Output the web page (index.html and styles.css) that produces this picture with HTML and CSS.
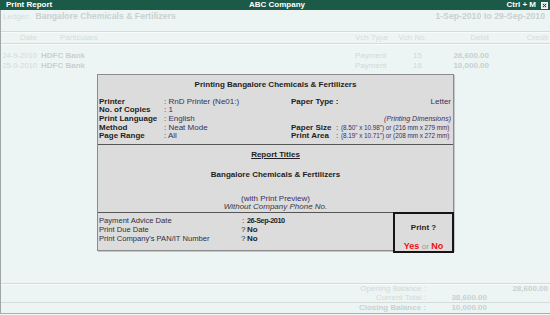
FILE: index.html
```html
<!DOCTYPE html>
<html>
<head>
<meta charset="utf-8">
<link rel="stylesheet" href="styles.css">
</head>
<body>
<div class="screen">
  <div class="titlebar">
    <span class="tb-left">Print Report</span>
    <span class="tb-center">ABC Company</span>
    <span class="tb-right">Ctrl + M
      <svg class="close" width="7" height="7" viewBox="0 0 7 7"><rect x="0.5" y="0.5" width="6" height="6" fill="#d8dcdc" stroke="#f4f4f4"/><path d="M2 2 L5 5 M5 2 L2 5" stroke="#333" stroke-width="1"/></svg>
    </span>
  </div>

  <div class="ledger">
    <div><span class="lg-label">Ledger:</span> <span class="lg-name">Bangalore Chemicals &amp; Fertilizers</span></div>
    <div class="lg-period">1-Sep-2010 to 29-Sep-2010</div>
  </div>

  <div class="grid colhead">
    <span class="c-date">Date</span>
    <span class="c-part hd-part">Particulars</span>
    <span class="c-type">Vch Type</span>
    <span class="c-no">Vch No.</span>
    <span class="c-num">Debit</span>
    <span class="c-num">Credit</span>
  </div>

  <div class="rows">
    <div class="grid row">
      <span class="c-date">24-9-2010</span>
      <span class="c-part b">HDFC Bank</span>
      <span class="c-type">Payment</span>
      <span class="c-no v">15</span>
      <span class="c-num b">28,600.00</span>
      <span class="c-num"></span>
    </div>
    <div class="grid row">
      <span class="c-date">25-9-2010</span>
      <span class="c-part b">HDFC Bank</span>
      <span class="c-type">Payment</span>
      <span class="c-no v">16</span>
      <span class="c-num b">10,000.00</span>
      <span class="c-num"></span>
    </div>
  </div>

  <div class="spacer"></div>

  <div class="totals">
    <div class="tgrid">
      <span class="t-label">Opening Balance :</span><span class="c-num"></span><span class="c-num b">28,600.00</span>
      <span class="t-label">Current Total :</span><span class="c-num b">38,600.00</span><span class="c-num"></span>
    </div>
    <div class="tgrid closing">
      <span class="t-label b">Closing Balance :</span><span class="c-num b">10,000.00</span><span class="c-num"></span>
    </div>
  </div>

  <div class="dialog">
    <div class="dlg-title">Printing Bangalore Chemicals &amp; Fertilizers</div>

    <div class="settings">
      <div class="srow">
        <span class="lbl">Printer</span>
        <span class="val">: RnD Printer (Ne01:)</span>
        <span class="lbl">Paper Type :</span>
        <span class="val right">Letter</span>
      </div>
      <div class="srow">
        <span class="lbl">No. of Copies</span>
        <span class="val">: 1</span>
        <span></span><span></span>
      </div>
      <div class="srow">
        <span class="lbl">Print Language</span>
        <span class="val">: English</span>
        <span class="val right dims-note">(Printing Dimensions)</span>
      </div>
      <div class="srow">
        <span class="lbl">Method</span>
        <span class="val">: Neat Mode</span>
        <span class="lbl">Paper Size</span>
        <span class="val dims"><span class="colon">:</span> (8.50" x 10.98") or (216 mm x 279 mm)</span>
      </div>
      <div class="srow">
        <span class="lbl">Page Range</span>
        <span class="val">: All</span>
        <span class="lbl">Print Area</span>
        <span class="val dims"><span class="colon">:</span> (8.19" x 10.71") or (208 mm x 272 mm)</span>
      </div>
    </div>

    <div class="titles">
      <div class="rt">Report Titles</div>
      <div class="rt-name">Bangalore Chemicals &amp; Fertilizers</div>
      <div class="rt-preview">(with Print Preview)</div>
      <div class="rt-phone">Without Company Phone No.</div>
    </div>

    <div class="bottom">
      <div class="opts">
        <div class="orow"><span>Payment Advice Date</span><span class="mark">:</span><span class="ov date">26-Sep-2010</span></div>
        <div class="orow"><span>Print Due Date</span><span class="mark">?</span><span class="ov">No</span></div>
        <div class="orow"><span>Print Company's PAN/IT Number</span><span class="mark">?</span><span class="ov">No</span></div>
      </div>
      <div class="printbox">
        <div class="pq">Print ?</div>
        <div class="yn"><span class="red">Yes</span> <span class="or">or</span> <span class="red">No</span></div>
      </div>
    </div>
  </div>
</div>
</body>
</html>
```

FILE: styles.css
```css
* { box-sizing: border-box; margin: 0; padding: 0; }

body {
  margin: 0;
  width: 550px;
  height: 315px;
  overflow: hidden;
  background: #f3f8f7;
  font-family: "Liberation Sans", Arial, sans-serif;
  font-size: 8px;
  color: #cdd5d5;
}

.screen {
  position: relative;
  width: 550px;
  height: 314px;
  border-left: 1px solid #9ea6a6;
  border-bottom: 1px solid #a8afaf;
  background: #edf5f4;
  display: flex;
  flex-direction: column;
}

.b { font-weight: bold; }

/* title bar */
.titlebar {
  height: 10px;
  margin-left: -1px;
  width: 550px;
  background: #1b5a46;
  color: #fff;
  font-weight: bold;
  font-size: 8px;
  line-height: 10px;
  display: grid;
  grid-template-columns: 1fr auto 1fr;
  padding: 0 2px 0 6px;
}
.tb-center { text-align: center; }
.tb-right {
  justify-self: end;
  display: flex;
  align-items: center;
  gap: 5px;
}
.close { display: block; }

/* ledger header */
.ledger {
  height: 22px;
  display: flex;
  justify-content: space-between;
  padding: 1px 5px 0 2px;
  line-height: 11px;
  border-bottom: 1px solid #d4dbdb;
  box-shadow: 0 1px 0 #f7fbfa;
  white-space: nowrap;
}
.lg-label { color: #d5dcdc; }
.lg-name, .lg-period {
  font-weight: bold;
  font-size: 8.7px;
  color: #c9d1d1;
}
.lg-name { margin-left: 3px; }

/* columns */
.grid {
  display: grid;
  grid-template-columns: 36px 318px 42px 30px 62px 59px;
  line-height: 10px;
  white-space: nowrap;
}
.colhead {
  height: 11px;
  margin-top: 1px;
  border-bottom: 1px solid #d4dbdb;
  box-shadow: 0 1px 0 #f7fbfa;
  color: #d5dcdc;
}
.c-date { text-align: right; }
.row .c-date { font-size: 7.6px; }
.c-part { padding-left: 4px; }
.hd-part { padding-left: 23px; }
.c-no { text-align: right; }
.c-no.v { text-align: left; padding-left: 16px; }
.c-num { text-align: right; }

.rows { padding-top: 7px; }
.row { color: #d2d9d9; }
.row .b { color: #c8d0d0; }

.spacer { flex: 1; }

/* totals */
.totals {
  border-top: 1px solid #d4dbdb;
  box-shadow: inset 0 1px 0 #f7fbfa;
  padding-bottom: 1px;
}
.tgrid {
  display: grid;
  grid-template-columns: 425px 61px 61px;
  line-height: 9px;
  color: #d2d9d9;
  white-space: nowrap;
}
.tgrid .b { color: #c9d1d1; }
.t-label { text-align: right; }
.closing {
  border-top: 1px solid #d4dbdb;
}

/* dialog */
.dialog {
  position: absolute;
  left: 96px;
  top: 74px;
  width: 357px;
  height: 177px;
  background: #dcdcdc;
  border: 1px solid #8c8c8c;
  box-shadow: 1px 1px 0 #c2c8c8;
  color: #1e1e1e;
  display: flex;
  flex-direction: column;
}

.dlg-title {
  height: 19px;
  line-height: 19px;
  text-align: center;
  font-weight: bold;
}

.settings {
  padding: 3.5px 1px 3px 1px;
  border-bottom: 1px solid #555;
}
.srow {
  display: grid;
  grid-template-columns: 65px 127px 45px 117px;
  line-height: 8.7px;
  height: 8.7px;
  white-space: nowrap;
}
.lbl { font-weight: bold; color: #1e1e1e; }
.val { color: #3b2f5c; white-space: nowrap; }
.right { text-align: right; }
.srow > .right { padding-right: 2px; }
.dims-note {
  grid-column: 3 / span 2;
  font-style: italic;
  font-size: 7px;
}
.dims { font-size: 6.4px; letter-spacing: -0.05px; }
.dims .colon { font-size: 8px; margin-right: 1px; }

.titles {
  height: 68px;
  padding-top: 5px;
  text-align: center;
  border-bottom: 1px solid #555;
}
.rt {
  line-height: 9px;
  font-weight: bold;
  text-decoration: underline;
}
.rt-name {
  margin-top: 11px;
  line-height: 9px;
  font-weight: bold;
}
.rt-preview {
  margin-top: 16px;
  line-height: 8.5px;
  color: #3b2f5c;
}
.rt-phone {
  line-height: 8.5px;
  font-style: italic;
  color: #3a3a3a;
}

.bottom {
  flex: 1;
  display: flex;
}
.opts {
  flex: 1;
  padding: 3px 0 0 1px;
}
.orow {
  display: grid;
  grid-template-columns: 142px 4px auto;
  line-height: 9px;
  color: #2f2f3f;
  white-space: nowrap;
}
.orow > span:first-child { font-size: 7.6px; }
.mark { text-align: center; }
.ov { font-weight: bold; padding-left: 2px; color: #1e1e1e; }
.date { font-size: 7.3px; letter-spacing: -0.45px; }

.printbox {
  width: 61px;
  margin: -1px -1px -1px 0;
  border: 2px solid #151515;
  background: #dcdcdc;
  text-align: center;
  display: flex;
  flex-direction: column;
}
.pq {
  font-weight: bold;
  line-height: 9px;
  margin-top: 9px;
}
.yn {
  margin-top: 10px;
  line-height: 9px;
  font-size: 9px;
}
.red { color: #ee1111; font-weight: bold; }
.or { color: #9a9a9a; font-size: 8px; }
```
